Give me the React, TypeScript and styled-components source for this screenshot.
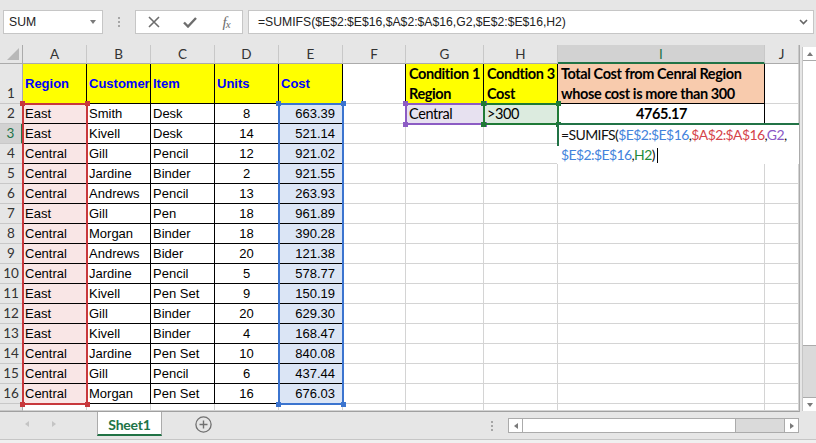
import React from "react";
import styled, { createGlobalStyle } from "styled-components";

const ARIAL = `"Liberation Sans", Arial, sans-serif`;
const CALIBRI = `Lato, "Liberation Sans", sans-serif`;
const GRID = "#d4d4d4";
const FRAME = "#ababab";
const GREEN = "#217346";
const YELLOW = "#ffff00";

const REF = {
  red: { line: "#c8383c", text: "#d5434a", fill: "#f9e6e6" },
  blue: { line: "#3b74cf", text: "#4383dc", fill: "#dbe5f5" },
  purple: { line: "#8c5cc4", text: "#8a58c6", fill: "#e7e1f0" },
  green: { line: "#1f7a36", text: "#1f8a3a", fill: "#dcebdf" },
};

const COL_WIDTHS = [23, 64, 64, 64, 64, 64, 63, 78, 74, 207, 34];
const ROW_HEIGHTS = [19, 40, ...Array(15).fill(20), 7];
const LETTERS = ["A", "B", "C", "D", "E", "F", "G", "H", "I", "J"];
const HEADERS = ["Region", "Customer", "Item", "Units", "Cost"];

const DATA: [string, string, string, number, string][] = [
  ["East", "Smith", "Desk", 8, "663.39"],
  ["East", "Kivell", "Desk", 14, "521.14"],
  ["Central", "Gill", "Pencil", 12, "921.02"],
  ["Central", "Jardine", "Binder", 2, "921.55"],
  ["Central", "Andrews", "Pencil", 13, "263.93"],
  ["East", "Gill", "Pen", 18, "961.89"],
  ["Central", "Morgan", "Binder", 18, "390.28"],
  ["Central", "Andrews", "Bider", 20, "121.38"],
  ["Central", "Jardine", "Pencil", 5, "578.77"],
  ["East", "Kivell", "Pen Set", 9, "150.19"],
  ["East", "Gill", "Binder", 20, "629.30"],
  ["East", "Kivell", "Binder", 4, "168.47"],
  ["Central", "Jardine", "Pen Set", 10, "840.08"],
  ["Central", "Gill", "Pencil", 6, "437.44"],
  ["Central", "Morgan", "Pen Set", 16, "676.03"],
];

const GlobalStyle = createGlobalStyle`
  html, body { margin: 0; padding: 0; }
  body { background: #e6e6e6; overflow: hidden; }
`;

const Window = styled.div`
  width: 816px;
  height: 443px;
  overflow: hidden;
  background: #e6e6e6;
  display: flex;
  flex-direction: column;
`;

/* ---------- formula bar ---------- */

const FormulaBar = styled.div`
  display: flex;
  align-items: center;
  height: 45px;
  box-sizing: border-box;
  padding: 10px 2px 11px 3px;
`;

const NameBox = styled.div`
  box-sizing: border-box;
  width: 100px;
  height: 24px;
  background: #fff;
  border: 1px solid #c6c6c6;
  display: flex;
  align-items: center;
  justify-content: space-between;
  padding: 0 6px 0 5px;
  font: 12.2px ${ARIAL};
  color: #222;
`;

const Caret = styled.span`
  width: 0;
  height: 0;
  border-left: 3.5px solid transparent;
  border-right: 3.5px solid transparent;
  border-top: 4px solid #7a7a7a;
`;

const Grip = styled.div<{ $w: number; $gapRight?: number }>`
  width: ${(p) => p.$w}px;
  margin-right: ${(p) => p.$gapRight ?? 0}px;
  display: flex;
  flex-direction: column;
  align-items: center;
  gap: 2px;

  span {
    width: 2px;
    height: 2px;
    background: #a6a6a6;
  }
`;

const FxButtons = styled.div`
  box-sizing: border-box;
  width: 108px;
  height: 24px;
  background: #fff;
  border: 1px solid #c6c6c6;
  display: grid;
  grid-template-columns: repeat(3, 36px);
  place-items: center;
  color: #6d6d6d;
`;

const FxLabel = styled.span`
  font: italic 15px "Liberation Serif", serif;
  color: #6d6d6d;
  letter-spacing: -1px;

  sub {
    font-size: 11px;
    vertical-align: -1px;
  }
`;

const FormulaInput = styled.div`
  flex: 1;
  margin-left: 5px;
  box-sizing: border-box;
  height: 24px;
  background: #fff;
  border: 1px solid #c6c6c6;
  display: flex;
  align-items: center;
  justify-content: space-between;
  padding: 0 5px 0 9px;
  font: 12.2px ${ARIAL};
  color: #222;
`;

/* ---------- sheet ---------- */

const Main = styled.div`
  display: flex;
  align-items: flex-start;
`;

const Sheet = styled.div`
  display: grid;
  grid-template-columns: ${COL_WIDTHS.map((w) => `${w}px`).join(" ")};
  grid-template-rows: ${ROW_HEIGHTS.map((h) => `${h}px`).join(" ")};
  background: #fff;
  border-right: 1px solid ${FRAME};
  border-bottom: 1px solid #a0a0a0;
  overflow: hidden;
`;

const Corner = styled.div`
  grid-row: 1;
  grid-column: 1;
  box-sizing: border-box;
  background: #e6e6e6;
  border-right: 1px solid ${FRAME};
  border-bottom: 1px solid ${FRAME};
  display: flex;
  align-items: flex-end;
  justify-content: flex-end;
  padding: 0 3px 3px 0;
`;

const ColHead = styled.div<{ $c: number; $active?: boolean }>`
  grid-row: 1;
  grid-column: ${(p) => p.$c};
  box-sizing: border-box;
  background: ${(p) => (p.$active ? "#d2d2d2" : "#e6e6e6")};
  border-right: 1px solid #c8c8c8;
  border-bottom: ${(p) => (p.$active ? `2px solid ${GREEN}` : `1px solid ${FRAME}`)};
  display: flex;
  align-items: center;
  justify-content: center;
  font: 13.5px ${CALIBRI};
  color: ${(p) => (p.$active ? GREEN : "#333")};
`;

const RowHead = styled.div<{ $r: number; $active?: boolean }>`
  grid-row: ${(p) => p.$r};
  grid-column: 1;
  box-sizing: border-box;
  background: ${(p) => (p.$active ? "#d2d2d2" : "#e6e6e6")};
  border-right: ${(p) => (p.$active ? `2px solid ${GREEN}` : `1px solid ${FRAME}`)};
  border-bottom: 1px solid #c8c8c8;
  display: flex;
  align-items: flex-end;
  justify-content: center;
  font: 13.5px/19px ${CALIBRI};
  color: ${(p) => (p.$active ? GREEN : "#333")};
  overflow: hidden;
`;

type Align = "left" | "center" | "right";

const Cell = styled.div<{
  $r: number;
  $c: number;
  $align: Align;
  $bold?: boolean;
  $color?: string;
  $bg?: string;
  $right: string;
  $bottom: string;
  $calibri?: boolean;
}>`
  grid-row: ${(p) => p.$r};
  grid-column: ${(p) => p.$c};
  box-sizing: border-box;
  min-width: 0;
  display: flex;
  align-items: center;
  justify-content: ${(p) =>
    p.$align === "center" ? "center" : p.$align === "right" ? "flex-end" : "flex-start"};
  padding: 0 ${(p) => (p.$align === "right" ? "7px" : "2px")} 0
    ${(p) => (p.$calibri ? "3px" : "2px")};
  background: ${(p) => p.$bg ?? "#fff"};
  border-right: 1px solid ${(p) => p.$right};
  border-bottom: 1px solid ${(p) => p.$bottom};
  font-family: ${(p) => (p.$calibri ? CALIBRI : ARIAL)};
  font-size: ${(p) => (p.$calibri ? "14.5px" : "13px")};
  letter-spacing: ${(p) => (p.$calibri ? "-0.4px" : "0")};
  font-weight: ${(p) => (p.$bold ? 700 : 400)};
  line-height: ${(p) => (p.$calibri ? "20px" : "19px")};
  color: ${(p) => p.$color ?? "#000"};
  white-space: nowrap;
  overflow: hidden;
`;

const RefBox = styled.div<{ $area: string; $color: string }>`
  grid-area: ${(p) => p.$area};
  margin: -1px;
  border: 2px solid ${(p) => p.$color};
  position: relative;
  z-index: 2;
  pointer-events: none;
`;

const Handle = styled.span<{ $color: string; $x: "left" | "right"; $y: "top" | "bottom" }>`
  position: absolute;
  width: 5px;
  height: 5px;
  background: ${(p) => p.$color};
  ${(p) => p.$x}: -4px;
  ${(p) => p.$y}: -4px;
`;

const EditBox = styled.div`
  grid-area: 4 / 10 / 6 / 12;
  margin: -1px 0 0 -1px;
  position: relative;
  z-index: 3;
  background: #fff;
  border-top: 2px solid ${GREEN};
  padding-left: 4px;
  font: 14px/20px ${CALIBRI};
  letter-spacing: -0.6px;
  color: #111;
  white-space: nowrap;

  &::before {
    content: "";
    position: absolute;
    left: 0;
    top: -2px;
    width: 2px;
    height: 23px;
    background: ${GREEN};
  }
`;

const Token = styled.span<{ $color?: string }>`
  color: ${(p) => p.$color ?? "#111"};
`;

const TextCursor = styled.span`
  display: inline-block;
  width: 1px;
  height: 15px;
  margin-left: 2px;
  background: #000;
  vertical-align: -3px;
`;

/* ---------- scroll bars ---------- */

const VScroll = styled.div`
  margin: 2px 0 0 2px;
  width: 14px;
  height: 364px;
  box-sizing: border-box;
  border-left: 1px solid #c6c6c6;
  background: #dadada;
  display: flex;
  flex-direction: column;
`;

const ScrollButton = styled.div<{ $edge: "top" | "bottom" | "left" | "right" }>`
  flex: none;
  box-sizing: border-box;
  background: #fff;
  display: flex;
  align-items: center;
  justify-content: center;
  ${(p) => (p.$edge === "top" || p.$edge === "bottom" ? "height: 14px;" : "width: 14px;")}
  border-${(p) => p.$edge}: 1px solid ${FRAME};
`;

const Thumb = styled.div<{ $size: number; $vertical?: boolean }>`
  flex: none;
  box-sizing: border-box;
  background: #fff;
  ${(p) =>
    p.$vertical
      ? `height: ${p.$size}px; border-bottom: 1px solid ${FRAME};`
      : `width: ${p.$size}px; border-right: 1px solid ${FRAME};`}
`;

const Tri = styled.span<{ $dir: "up" | "down" | "left" | "right"; $color?: string; $s?: number }>`
  width: 0;
  height: 0;
  ${({ $dir, $color = "#7a7a7a", $s = 3.5 }) => {
    const side = `${$s}px solid transparent`;
    const solid = `${$s + 0.5}px solid ${$color}`;
    if ($dir === "up") return `border-left: ${side}; border-right: ${side}; border-bottom: ${solid};`;
    if ($dir === "down") return `border-left: ${side}; border-right: ${side}; border-top: ${solid};`;
    if ($dir === "left") return `border-top: ${side}; border-bottom: ${side}; border-right: ${solid};`;
    return `border-top: ${side}; border-bottom: ${side}; border-left: ${solid};`;
  }}
`;

/* ---------- bottom bar ---------- */

const TabBar = styled.div`
  display: flex;
  align-items: flex-start;
  height: 28px;
  box-sizing: border-box;
  border-bottom: 1px solid #c6c6c6;
`;

const TabNav = styled.div`
  width: 97px;
  height: 24px;
  box-sizing: border-box;
  display: flex;
  align-items: center;
  padding-left: 25px;
  gap: 23px;
`;

const SheetTab = styled.div`
  width: 65px;
  height: 24px;
  box-sizing: border-box;
  background: #fff;
  border-left: 1px solid ${FRAME};
  border-right: 1px solid ${FRAME};
  border-bottom: 2px solid ${GREEN};
  display: flex;
  align-items: center;
  justify-content: center;
  padding-top: 2px;
  font: 700 14px ${CALIBRI};
  letter-spacing: -0.2px;
  color: ${GREEN};
`;

const AddSheet = styled.div`
  margin: 4px 0 0 33px;
  width: 17px;
  height: 17px;
  display: flex;
`;

const HRight = styled.div`
  margin: 0 17px 0 auto;
  height: 27px;
  display: flex;
  align-items: center;
`;

const HScroll = styled.div`
  width: 291px;
  height: 15px;
  box-sizing: border-box;
  border: 1px solid ${FRAME};
  background: #dadada;
  display: flex;
`;

const Track = styled.div`
  flex: 1;
`;

const Footer = styled.div`
  flex: 1;
  background: #f0f0f0;
`;

/* ---------- cell content ---------- */

type CellDef = {
  text?: React.ReactNode;
  align?: Align;
  bold?: boolean;
  color?: string;
  bg?: string;
  boxed?: boolean;
  rightLine?: boolean;
  calibri?: boolean;
};

function cellAt(r: number, c: number): CellDef {
  if (c <= 4 && r === 1) {
    return { text: HEADERS[c], bold: true, color: "#0000ff", bg: YELLOW, boxed: true };
  }
  if (c <= 4 && r >= 2 && r <= 16) {
    const row = DATA[r - 2];
    return {
      text: row[c],
      align: c === 3 ? "center" : c === 4 ? "right" : "left",
      bg: c === 0 ? REF.red.fill : c === 4 ? REF.blue.fill : undefined,
      boxed: true,
    };
  }
  if (c === 5 && r <= 2) return { rightLine: true };
  if (r === 1 && c === 6) {
    return { text: <>Condition 1<br />Region</>, bold: true, bg: YELLOW, boxed: true, calibri: true };
  }
  if (r === 1 && c === 7) {
    return { text: <>Condtion 3<br />Cost</>, bold: true, bg: YELLOW, boxed: true, calibri: true };
  }
  if (r === 1 && c === 8) {
    return {
      text: <>Total Cost from Cenral Region<br />whose cost is more than 300</>,
      bold: true,
      bg: "#f8cbad",
      boxed: true,
      calibri: true,
    };
  }
  if (r === 2 && c === 6) return { text: "Central", bg: REF.purple.fill, boxed: true, calibri: true };
  if (r === 2 && c === 7) return { text: ">300", bg: REF.green.fill, boxed: true, calibri: true };
  if (r === 2 && c === 8) return { text: "4765.17", bold: true, align: "center", boxed: true, calibri: true };
  return {};
}

const RANGES = [
  { area: "3 / 2 / 18 / 3", color: REF.red.line },
  { area: "3 / 6 / 18 / 7", color: REF.blue.line },
  { area: "3 / 8 / 4 / 9", color: REF.purple.line },
  { area: "3 / 9 / 4 / 10", color: REF.green.line },
];

const ROW_NUMBERS = Array.from({ length: 17 }, (_, i) => i + 1);

export default function App() {
  return (
    <Window>
      <GlobalStyle />
      <FormulaBar>
        <NameBox>
          SUM
          <Caret />
        </NameBox>
        <Grip $w={32}>
          <span />
          <span />
          <span />
        </Grip>
        <FxButtons>
          <svg width="12" height="12" viewBox="0 0 12 12">
            <path d="M1 1 L11 11 M11 1 L1 11" stroke="#6d6d6d" strokeWidth="1.6" fill="none" />
          </svg>
          <svg width="14" height="11" viewBox="0 0 14 11">
            <path d="M1 5.5 L5 9.5 L13 1" stroke="#6d6d6d" strokeWidth="2.4" fill="none" />
          </svg>
          <FxLabel>
            f<sub>x</sub>
          </FxLabel>
        </FxButtons>
        <FormulaInput>
          =SUMIFS($E$2:$E$16,$A$2:$A$16,G2,$E$2:$E$16,H2)
          <svg width="9" height="6" viewBox="0 0 9 6">
            <path d="M1 1 L4.5 4.5 L8 1" stroke="#666" strokeWidth="1.6" fill="none" />
          </svg>
        </FormulaInput>
      </FormulaBar>

      <Main>
        <Sheet>
          <Corner>
            <svg width="12" height="12" viewBox="0 0 12 12">
              <polygon points="12,0 12,12 0,12" fill="#b8b8b8" />
            </svg>
          </Corner>
          {LETTERS.map((l, i) => (
            <ColHead key={l} $c={i + 2} $active={l === "I"}>
              {l}
            </ColHead>
          ))}
          {ROW_NUMBERS.map((r) => (
            <RowHead key={r} $r={r + 1} $active={r === 3}>
              {r <= 16 ? r : ""}
            </RowHead>
          ))}
          {ROW_NUMBERS.map((r) =>
            LETTERS.map((l, c) => {
              const d = cellAt(r, c);
              return (
                <Cell
                  key={`${l}${r}`}
                  $r={r + 1}
                  $c={c + 2}
                  $align={d.align ?? "left"}
                  $bold={d.bold}
                  $color={d.color}
                  $bg={d.bg}
                  $calibri={d.calibri}
                  $right={d.boxed || d.rightLine ? "#000" : GRID}
                  $bottom={d.boxed ? "#000" : GRID}
                >
                  {d.text}
                </Cell>
              );
            })
          )}
          {RANGES.map((rg) => (
            <RefBox key={rg.area} $area={rg.area} $color={rg.color}>
              <Handle $color={rg.color} $x="left" $y="top" />
              <Handle $color={rg.color} $x="right" $y="top" />
              <Handle $color={rg.color} $x="left" $y="bottom" />
              <Handle $color={rg.color} $x="right" $y="bottom" />
            </RefBox>
          ))}
          <EditBox>
            <Token>=SUMIFS(</Token>
            <Token $color={REF.blue.text}>$E$2:$E$16</Token>
            <Token>,</Token>
            <Token $color={REF.red.text}>$A$2:$A$16</Token>
            <Token>,</Token>
            <Token $color={REF.purple.text}>G2</Token>
            <Token>,</Token>
            <br />
            <Token $color={REF.blue.text}>$E$2:$E$16</Token>
            <Token>,</Token>
            <Token $color={REF.green.text}>H2</Token>
            <Token>)</Token>
            <TextCursor />
          </EditBox>
        </Sheet>
        <VScroll>
          <ScrollButton $edge="bottom">
            <Tri $dir="up" />
          </ScrollButton>
          <Thumb $vertical $size={285} />
          <Track />
          <ScrollButton $edge="top">
            <Tri $dir="down" />
          </ScrollButton>
        </VScroll>
      </Main>

      <TabBar>
        <TabNav>
          <Tri $dir="left" $color="#c4c4c4" />
          <Tri $dir="right" $color="#c4c4c4" />
        </TabNav>
        <SheetTab>Sheet1</SheetTab>
        <AddSheet>
          <svg width="17" height="17" viewBox="0 0 17 17">
            <circle cx="8.5" cy="8.5" r="7.6" stroke="#707070" strokeWidth="1.3" fill="none" />
            <path d="M8.5 4.5 V12.5 M4.5 8.5 H12.5" stroke="#707070" strokeWidth="1.4" />
          </svg>
        </AddSheet>
        <HRight>
          <Grip $w={16} $gapRight={8}>
            <span />
            <span />
            <span />
          </Grip>
          <HScroll>
            <ScrollButton $edge="right">
              <Tri $dir="left" />
            </ScrollButton>
            <Thumb $size={213} />
            <Track />
            <ScrollButton $edge="left">
              <Tri $dir="right" />
            </ScrollButton>
          </HScroll>
        </HRight>
      </TabBar>
      <Footer />
    </Window>
  );
}
